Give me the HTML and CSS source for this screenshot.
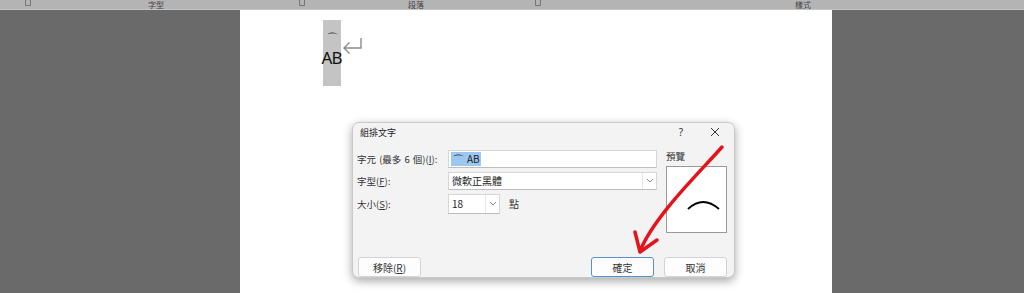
FILE: index.html
```html
<!DOCTYPE html>
<html lang="zh-Hant">
<head>
<meta charset="utf-8">
<title>組排文字</title>
<link rel="stylesheet" href="styles.css">
</head>
<body>
<div class="ribbon">
  <div class="grp g0"><span class="launcher"></span></div>
  <div class="grp g1"><span class="glabel">字型</span><span class="launcher"></span></div>
  <div class="grp g2"><span class="glabel">段落</span><span class="launcher"></span></div>
  <div class="grp g3"><span class="glabel">樣式</span></div>
</div>
<div class="workspace">
  <div class="page">
    <div class="combined">
      <div class="cblock">
        <span class="arc">⌒</span>
        <span class="ab">AB</span>
      </div>
      <svg class="ret" width="22" height="20" viewBox="0 0 22 20">
        <path d="M19 1 V11 H2 M7.5 5.5 L2 11 L7.5 16.5" fill="none" stroke="#8a8a8a" stroke-width="1.4"/>
      </svg>
    </div>
  </div>
</div>

<div class="dialog">
  <div class="titlebar">
    <span class="title">組排文字</span>
    <span class="help">?</span>
    <span class="close">
      <svg width="10" height="10" viewBox="0 0 10 10"><path d="M1 1 L9 9 M9 1 L1 9" stroke="#333" stroke-width="1"/></svg>
    </span>
  </div>
  <div class="dbody">
    <div class="form">
      <div class="row">
        <label class="lbl">字元 (最多 6 個)(<u>I</u>):</label>
        <div class="field wide"><span class="sel"><span class="selarc">⌒</span>AB</span></div>
      </div>
      <div class="row">
        <label class="lbl">字型(<u>F</u>):</label>
        <div class="field wide combo"><span class="val">微軟正黑體</span><span class="drop"><svg width="8" height="5" viewBox="0 0 8 5"><path d="M1 1 L4 4 L7 1" fill="none" stroke="#888" stroke-width="1"/></svg></span></div>
      </div>
      <div class="row r3">
        <label class="lbl">大小(<u>S</u>):</label>
        <div class="field small combo"><span class="val">18</span><span class="drop"><svg width="8" height="5" viewBox="0 0 8 5"><path d="M1 1 L4 4 L7 1" fill="none" stroke="#888" stroke-width="1"/></svg></span></div>
        <span class="unit">點</span>
      </div>
    </div>
    <div class="preview">
      <div class="plabel">預覽</div>
      <div class="pbox">
        <svg class="parc" width="36" height="14" viewBox="0 0 36 14"><path d="M2 10 Q17 -4 33 10" fill="none" stroke="#000" stroke-width="2"/></svg>
      </div>
    </div>
  </div>
  <div class="buttons">
    <button class="btn">移除(<u>R</u>)</button>
    <span class="spacer"></span>
    <button class="btn default">確定</button>
    <button class="btn">取消</button>
  </div>
</div>

<svg class="annot" width="1024" height="293" viewBox="0 0 1024 293">
  <path d="M722 147 C 700 172, 655 215, 640 251" fill="none" stroke="#e3141b" stroke-width="3.5" stroke-linecap="round"/>
  <path d="M635 232 L640 252 L657 240" fill="none" stroke="#e3141b" stroke-width="3.5" stroke-linecap="round" stroke-linejoin="round"/>
</svg>
</body>
</html>
```
FILE: styles.css
```css
* { box-sizing: border-box; }
html, body { margin: 0; padding: 0; }
body {
  width: 1024px;
  height: 293px;
  overflow: hidden;
  background: #6a6a6a;
  font-family: "Noto Sans CJK TC", "Noto Sans", sans-serif;
  position: relative;
}
.ribbon {
  height: 10px;
  background: #b4b4b4;
  border-bottom: 1px solid #c4c4c4;
  display: flex;
  overflow: hidden;
}
.grp {
  display: flex;
  align-items: flex-start;
  height: 9px;
}
.g0 { width: 33px; justify-content: flex-end; }
.g1 { width: 274px; }
.g2 { width: 236px; }
.g3 { flex: 1; }
.glabel {
  font-size: 8px;
  line-height: 9px;
  color: #444;
  flex: 1;
  text-align: center;
}
.g1 .glabel { padding-right: 20px; }
.g2 .glabel { padding-right: 10px; }
.g3 .glabel { text-align: left; padding-left: 252px; }
.launcher {
  width: 6px;
  height: 6px;
  border: 1px solid #777;
  border-top: none;
  margin: 0 2px 0 0;
}
.workspace {
  display: flex;
  height: 283px;
}
.page {
  margin-left: 240px;
  width: 592px;
  background: #fff;
  padding: 10px 0 0 83px;
}
.combined {
  display: flex;
  align-items: flex-start;
}
.cblock {
  width: 18px;
  height: 66px;
  background: #c4c4c4;
  display: flex;
  flex-direction: column;
  align-items: center;
  padding-top: 11px;
}
.arc {
  font-family: "DejaVu Sans", sans-serif;
  font-size: 13px;
  line-height: 15px;
  height: 15px;
  color: #222;
}
.ab {
  font-family: "Noto Sans", sans-serif;
  font-size: 17px;
  line-height: 18px;
  letter-spacing: -1px;
  color: #111;
  margin-top: 3px;
  margin-right: 1px;
}
.ret { margin-top: 17px; margin-left: 1px; }

.dialog {
  position: absolute;
  left: 352px;
  top: 122px;
  width: 383px;
  height: 156px;
  background: #f3f3f3;
  border: 1px solid #c9c9c9;
  border-radius: 7px;
  box-shadow: 0 3px 10px rgba(0,0,0,0.35);
  font-size: 10px;
  color: #222;
  display: flex;
  flex-direction: column;
}
.titlebar {
  height: 21px;
  display: flex;
  align-items: center;
  padding-left: 7px;
}
.title { font-size: 9px; flex: 1; color: #222; }
.help { width: 18px; text-align: center; margin-right: 20px; font-family: "Noto Sans", sans-serif; font-size: 10px; color: #333; }
.close { width: 14px; display: flex; align-items: center; margin-right: 10px; }
.dbody {
  display: flex;
  padding: 8px 7px 0 4px;
  height: 113px;
}
.form {
  width: 305px;
  display: flex;
  flex-direction: column;
  gap: 4px;
}
.row {
  display: flex;
  align-items: center;
  height: 18px;
}
.row.r3 { height: 20px; }
.lbl {
  width: 91px;
  font-size: 9.5px;
  color: #333;
  white-space: nowrap;
  word-spacing: 1px;
}
.field {
  height: 100%;
  background: #fff;
  border: 1px solid #d6d6d6;
  border-bottom-color: #bdbdbd;
  display: flex;
  align-items: center;
  padding-left: 2px;
  font-size: 10px;
}
.wide { width: 209px; }
.small { width: 52px; }
.sel {
  background: #9cc7ef;
  color: #1a1a1a;
  padding: 0 1px;
  line-height: 14px;
  height: 14px;
  font-size: 10px;
  display: flex;
  align-items: center;
}
.selarc {
  font-family: "DejaVu Sans", sans-serif;
  font-size: 13px;
  line-height: 14px;
  margin-right: 2px;
  padding-top: 4px;
}
.val { flex: 1; padding-left: 1px; color: #222; }
.drop {
  width: 14px;
  height: 100%;
  border-left: 1px solid #e6e6e6;
  display: flex;
  align-items: center;
  justify-content: center;
}
.unit { margin-left: 9px; font-size: 10px; color: #333; }
.preview {
  margin-left: 9px;
  width: 63px;
  display: flex;
  flex-direction: column;
}
.plabel { height: 12px; line-height: 12px; font-size: 9.5px; margin-bottom: 4px; color: #333; }
.pbox {
  height: 67px;
  background: #fff;
  border: 1px solid #9a9a9a;
  display: flex;
  align-items: flex-start;
  justify-content: flex-end;
  padding: 32px 4px 0 0;
}
.buttons {
  display: flex;
  padding: 15px 7px 0 5px;
  gap: 10px;
}
.spacer { flex: 1; }
.btn {
  height: 20px;
  width: 63px;
  background: #fdfdfd;
  border: 1px solid #d3d3d3;
  border-radius: 3px;
  font-family: "Noto Sans CJK TC", "Noto Sans", sans-serif;
  font-size: 10px;
  color: #333;
  padding: 0;
}
.btn.default { border-color: #5b8fc7; }
.annot {
  position: absolute;
  left: 0;
  top: 0;
  pointer-events: none;
}
```
